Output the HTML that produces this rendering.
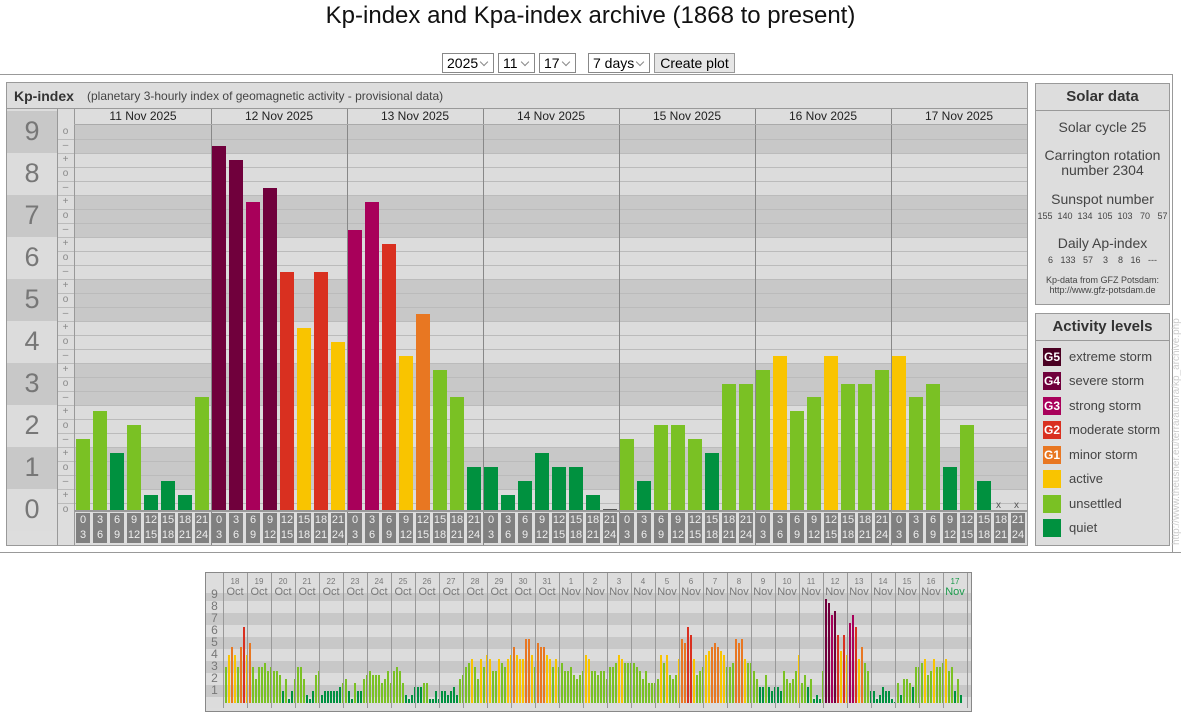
<!DOCTYPE html>
<html><head><meta charset="utf-8">
<style>
*{margin:0;padding:0;box-sizing:border-box}
body{width:1181px;height:708px;background:#fff;font-family:"Liberation Sans",sans-serif;position:relative;overflow:hidden;color:#333}
.a{position:absolute}
h1{position:absolute;left:0;width:1181px;top:2px;text-align:center;font-weight:normal;font-size:24px;color:#111}
.sel{position:absolute;top:53px;height:20px;border:1px solid #888;background:#fff;font-size:14px;line-height:18px;padding-left:4px;color:#000}
.sel:after{content:"";position:absolute;right:6px;top:5px;width:5px;height:5px;border-right:1px solid #888;border-bottom:1px solid #888;transform:rotate(45deg)}
.btn{position:absolute;top:53px;left:654px;width:81px;height:20px;border:1px solid #999;background:#e6e6e6;font-size:14px;line-height:18px;text-align:center;color:#000}
.lbl{position:absolute;left:7px;width:50px;text-align:center;font-size:27px;color:#777;line-height:42px}
.sc{position:absolute;left:57px;width:17px;text-align:center;font-size:10px;color:#888;line-height:10px}
.dh{position:absolute;top:109px;width:136px;text-align:center;font-size:12px;line-height:15px;color:#222}
.panel{position:absolute;left:1035px;width:135px;border:1px solid #999;background:#ddd;text-align:center;color:#444;white-space:nowrap}
.ph{font-weight:bold;font-size:15px;height:27px;line-height:26px;border-bottom:1px solid #999;color:#333}
.sw{position:absolute;left:7px;width:18px;height:18px;color:#fff;font-size:12px;font-weight:bold;line-height:18px;text-align:center}
.st{position:absolute;left:33px;font-size:13px;line-height:18px;color:#444}
.md{position:absolute;top:575px;width:24px;text-align:center;color:#777;line-height:9px}
</style></head><body>
<h1>Kp-index and Kpa-index archive (1868 to present)</h1>
<div class="sel" style="left:442px;width:52px">2025</div>
<div class="sel" style="left:498px;width:37px">11</div>
<div class="sel" style="left:539px;width:37px">17</div>
<div class="sel" style="left:588px;width:62px">7 days</div>
<div class="btn">Create plot</div>
<div class="a" style="left:0;top:74px;width:1172px;height:1px;background:#999"></div>
<div class="a" style="left:0;top:552px;width:1181px;height:1px;background:#999"></div>
<div class="a" style="left:1172px;top:74px;width:1px;height:479px;background:#999"></div>

<div class="a" style="left:6px;top:82px;width:1022px;height:464px;border:1px solid #999;background:#ddd"></div>
<div class="a" style="left:7px;top:108px;width:1020px;height:1px;background:#999"></div>
<div class="a" style="left:14px;top:88px;font-size:14px;font-weight:bold;color:#333">Kp-index</div>
<div class="a" style="left:87px;top:89px;font-size:12px;color:#444">(planetary 3-hourly index of geomagnetic activity - provisional data)</div>
<div id="main"></div>
<div class="a" style="left:57px;top:109px;width:1px;height:436px;background:#999"></div>
<div class="a" style="left:74px;top:109px;width:1px;height:436px;background:#999"></div>
<div class="a" style="left:74px;top:124px;width:953px;height:1px;background:#aaa"></div>
<div class="lbl" style="top:110px">9</div><div class="lbl" style="top:152px">8</div><div class="lbl" style="top:194px">7</div><div class="lbl" style="top:236px">6</div><div class="lbl" style="top:278px">5</div><div class="lbl" style="top:320px">4</div><div class="lbl" style="top:362px">3</div><div class="lbl" style="top:404px">2</div><div class="lbl" style="top:446px">1</div><div class="lbl" style="top:488px">0</div>
<div class="dh" style="left:75px">11 Nov 2025</div><div class="dh" style="left:211px">12 Nov 2025</div><div class="dh" style="left:347px">13 Nov 2025</div><div class="dh" style="left:483px">14 Nov 2025</div><div class="dh" style="left:619px">15 Nov 2025</div><div class="dh" style="left:755px">16 Nov 2025</div><div class="dh" style="left:891px">17 Nov 2025</div>
<div class="a" style="left:996px;top:500px;font-size:10px;color:#555">x</div>
<div class="a" style="left:1014px;top:500px;font-size:10px;color:#555">x</div>
<div id="ticks"></div>

<div class="panel" style="top:83px;height:222px">
<div class="ph">Solar data</div>
<div style="font-size:14px;margin-top:8px">Solar cycle 25</div>
<div style="font-size:14px;margin-top:13px;line-height:15px">Carrington rotation<br>number 2304</div>
<div style="font-size:14px;margin-top:13px">Sunspot number</div>
<div style="font-size:9px;margin-top:4px">155&nbsp; 140&nbsp; 134&nbsp; 105&nbsp; 103&nbsp;&nbsp; 70&nbsp;&nbsp; 57</div>
<div style="font-size:14px;margin-top:14px">Daily Ap-index</div>
<div style="font-size:9px;margin-top:4px">6&nbsp;&nbsp; 133&nbsp;&nbsp; 57&nbsp;&nbsp;&nbsp; 3&nbsp;&nbsp;&nbsp; 8&nbsp;&nbsp; 16&nbsp;&nbsp; ---</div>
<div style="font-size:9px;margin-top:10px;line-height:10px">Kp-data from GFZ Potsdam:<br>http://www.gfz-potsdam.de</div>
</div>
<div class="panel" style="top:313px;height:233px">
<div class="ph" style="font-size:15px">Activity levels</div>
<div class="sw" style="top:34px;background:#4a0022">G5</div><div class="st" style="top:34px">extreme storm</div>
<div class="sw" style="top:58px;background:#70003c">G4</div><div class="st" style="top:58px">severe storm</div>
<div class="sw" style="top:83px;background:#a8005a">G3</div><div class="st" style="top:83px">strong storm</div>
<div class="sw" style="top:107px;background:#d93020">G2</div><div class="st" style="top:107px">moderate storm</div>
<div class="sw" style="top:132px;background:#e87722">G1</div><div class="st" style="top:132px">minor storm</div>
<div class="sw" style="top:156px;background:#f9c400"></div><div class="st" style="top:156px">active</div>
<div class="sw" style="top:181px;background:#7ac124"></div><div class="st" style="top:181px">unsettled</div>
<div class="sw" style="top:205px;background:#00913f"></div><div class="st" style="top:205px">quiet</div>
</div>
<div class="a" style="left:1171px;top:545px;transform-origin:0 0;transform:rotate(-90deg);font-size:10px;color:#ccc;white-space:nowrap;width:215px">http://www.theusner.eu/terra/aurora/kp_archive.php</div>

<div class="a" style="left:205px;top:572px;width:767px;height:140px;border:1px solid #888;background:#ddd"></div>
<div id="mini"></div>

<script>
function col(v){return v<1.6?'#00913f':v<3.6?'#7ac124':v<4.6?'#f9c400':v<5.6?'#e87722':v<6.6?'#d93020':v<7.6?'#a8005a':v<8.9?'#70003c':'#4a0022';}
var h='';
for(var n=0;n<=9;n++){var t=510-42*(n+0.5),b=510-42*(n-0.5);var tt=Math.max(t,109),bb=Math.min(b,510);
var c=(n%2)?'#c8c8c8':'#dcdcdc';
h+='<div class="a" style="left:7px;top:'+tt+'px;width:50px;height:'+(Math.min(b,545)-tt)+'px;background:'+c+'"></div>';
var pt=Math.max(t,125);if(bb>pt)h+='<div class="a" style="left:75px;top:'+pt+'px;width:952px;height:'+(bb-pt)+'px;background:'+c+'"></div>';}
for(var k=0;k<27;k++){var y=503-14*k;if(y>125)h+='<div class="a" style="left:58px;top:'+y+'px;width:969px;height:1px;background:#bbb"></div>';}
for(var n=0;n<=9;n++){var c0=510-42*n;
if(n<9)h+='<div class="sc" style="top:'+(c0-14-5)+'px">+</div>';
h+='<div class="sc" style="top:'+(c0-5)+'px">o</div>';
if(n>0)h+='<div class="sc" style="top:'+(c0+14-5)+'px">\u2013</div>';}
var D=[[1.69,2.36,1.36,2.02,.36,.69,.36,2.69],[8.67,8.33,7.33,7.67,5.67,4.33,5.67,4.0],[6.67,7.33,6.33,3.67,4.67,3.33,2.69,1.02],[1.02,.36,.69,1.36,1.02,1.02,.36,0.03],[1.69,.69,2.02,2.02,1.69,1.36,3.0,3.0],[3.33,3.67,2.36,2.69,3.67,3.0,3.0,3.33],[3.67,2.69,3.0,1.02,2.02,.69]];
for(var d=0;d<7;d++){for(var s=0;s<D[d].length;s++){var v=D[d][s],ht=Math.max(1,Math.round(v*42));
h+='<div class="a" style="left:'+(76+d*136+s*17)+'px;top:'+(510-ht)+'px;width:14px;height:'+ht+'px;background:'+(v<0.1?'#555':col(v))+'"></div>';}
if(d>0)h+='<div class="a" style="left:'+(75+d*136)+'px;top:109px;width:1px;height:436px;background:#888"></div>';}
h+='<div class="a" style="left:74px;top:510px;width:953px;height:2px;background:#999"></div>';
document.getElementById('main').innerHTML=h;
var tk='';var L=[[0,3],[3,6],[6,9],[9,12],[12,15],[15,18],[18,21],[21,24]];
for(var d=0;d<7;d++)for(var s=0;s<8;s++)tk+='<div class="a" style="left:'+(76+d*136+s*17)+'px;top:513px;width:14px;height:30px;background:#808080;color:#eee;font-size:11px;line-height:15px;text-align:center;overflow:hidden">'+L[s][0]+'<br>'+L[s][1]+'</div>';
document.getElementById('ticks').innerHTML=tk;
var M=[[3,4,4.7,4,3,4.7,6.3,4],[5,3,2,3,3,3.3,2.7,3],[2.7,2.7,2.3,1,2,.3,1,2],[3,3,2,.7,.3,1,2.3,2.7],[.7,1,1,1,1,1,1.3,1.7],[2,1,.3,1.7,1,1,2,2.3],[2.7,2.3,2.3,2.3,1.7,2,2.7,1.7],[2.7,3,2.7,1.7,.7,.3,.7,1.3],[1.3,1.3,1.7,1.7,.3,.3,1,.3],[1,1,.7,1,1.3,.7,2,2.3],[3,3.3,3.7,3,2,3.7,3,4],[3.7,2.7,2.7,3.7,3.3,3,3.7,4],[4.7,4,3.7,3.7,5.3,5.3,4,3],[5,4.7,4.7,4,3.7,3,3.7,3],[3.3,2.7,2.7,3,2.3,2,2.3,2.7],[4,3.7,2.7,2.7,2.3,2.7,2.7,2],[3,3,3.3,4,3.7,3.3,3.3,3.3],[3.3,3,2.7,2,2.7,1.7,1.7,1.7],[2,4,3.3,4,2.3,2,2.3,3.7],[5.3,5,6.3,5.7,3.7,2.3,2.7,3],[4,4.3,4.7,5,4.7,4.3,4,3],[3,3.3,5.3,5,5.3,3.7,3.3,3.3],[2.7,2,1.3,1.3,2.3,1.3,1,1.3],[1.3,1,2.7,2,1.7,2,2.7,4]].concat(D);
var m='';
for(var n=0;n<=9;n++){var t=703-12*(n+0.5);var tt=Math.max(t,593);var c=(n%2)?'#c8c8c8':'#dcdcdc';
m+='<div class="a" style="left:206px;top:'+tt+'px;width:765px;height:'+(Math.min(703-12*(n-0.5),708)-tt)+'px;background:'+c+'"></div>';}
m+='<div class="a" style="left:206px;top:573px;width:765px;height:20px;background:#ddd"></div>';
for(var n=1;n<=9;n++)m+='<div class="a" style="left:206px;top:'+(703-12*n-7)+'px;width:17px;text-align:center;font-size:12px;line-height:13px;color:#777">'+n+'</div>';
var names=['18','19','20','21','22','23','24','25','26','27','28','29','30','31','1','2','3','4','5','6','7','8','9','10','11','12','13','14','15','16','17'];
for(var d=0;d<31;d++){var x=223+24*d;
m+='<div class="a" style="left:'+x+'px;top:573px;width:1px;height:135px;background:#999"></div>';
for(var s=0;s<M[d].length;s++){var v=M[d][s],ht=Math.max(1,Math.round(v*12));
m+='<div class="a" style="left:'+(x+2+s*3)+'px;top:'+(703-ht)+'px;width:2px;height:'+ht+'px;background:'+col(v)+'"></div>';}
var cc=d==30?'#1a9a4a':'#777';
m+='<div class="md" style="left:'+x+'px;color:'+cc+'"><span style="font-size:8px">'+names[d]+'</span><br><span style="font-size:11px;line-height:11px">'+(d<14?'Oct':'Nov')+'</span></div>';}
m+='<div class="a" style="left:967px;top:573px;width:1px;height:135px;background:#999"></div>';
document.getElementById('mini').innerHTML=m;
</script>
</body></html>
